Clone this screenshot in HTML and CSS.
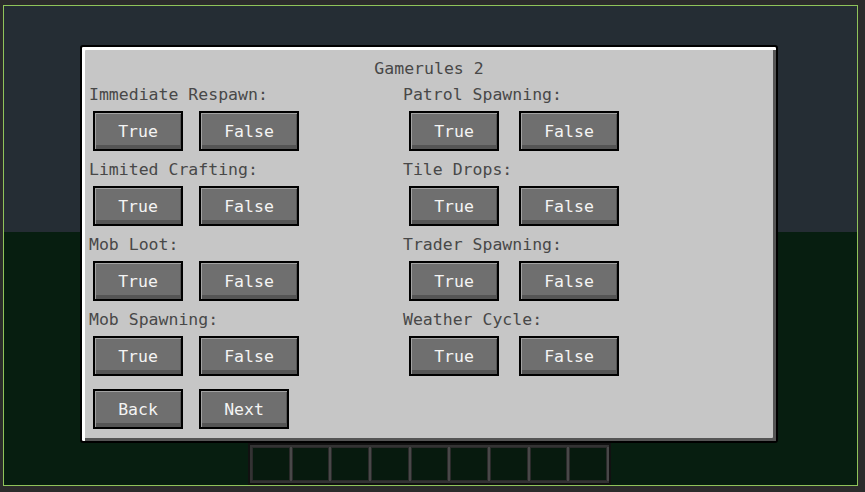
FILE: index.html
```html
<!DOCTYPE html>
<html lang="en">
<head>
    <meta charset="UTF-8">
    <title>Gamerules 2</title>
    <link rel="stylesheet" href="styles.css">
</head>
<body>
<section class="frame">
    <div class="world">
        <div class="panel">
            <h1 class="title">Gamerules 2</h1>
            <div class="rules">
                <div class="column">
                    <div class="rule">
                        <p class="label">Immediate Respawn:</p>
                        <div class="choices">
                            <button class="btn">True</button>
                            <button class="btn wide">False</button>
                        </div>
                    </div>
                    <div class="rule">
                        <p class="label">Limited Crafting:</p>
                        <div class="choices">
                            <button class="btn">True</button>
                            <button class="btn wide">False</button>
                        </div>
                    </div>
                    <div class="rule">
                        <p class="label">Mob Loot:</p>
                        <div class="choices">
                            <button class="btn">True</button>
                            <button class="btn wide">False</button>
                        </div>
                    </div>
                    <div class="rule">
                        <p class="label">Mob Spawning:</p>
                        <div class="choices">
                            <button class="btn">True</button>
                            <button class="btn wide">False</button>
                        </div>
                    </div>
                </div>
                <div class="column right">
                    <div class="rule">
                        <p class="label">Patrol Spawning:</p>
                        <div class="choices">
                            <button class="btn">True</button>
                            <button class="btn wide">False</button>
                        </div>
                    </div>
                    <div class="rule">
                        <p class="label">Tile Drops:</p>
                        <div class="choices">
                            <button class="btn">True</button>
                            <button class="btn wide">False</button>
                        </div>
                    </div>
                    <div class="rule">
                        <p class="label">Trader Spawning:</p>
                        <div class="choices">
                            <button class="btn">True</button>
                            <button class="btn wide">False</button>
                        </div>
                    </div>
                    <div class="rule">
                        <p class="label">Weather Cycle:</p>
                        <div class="choices">
                            <button class="btn">True</button>
                            <button class="btn wide">False</button>
                        </div>
                    </div>
                </div>
            </div>
            <div class="nav">
                <button class="btn">Back</button>
                <button class="btn">Next</button>
            </div>
        </div>
        <div class="hotbar">
            <div class="slot"></div>
            <div class="slot"></div>
            <div class="slot"></div>
            <div class="slot"></div>
            <div class="slot"></div>
            <div class="slot"></div>
            <div class="slot"></div>
            <div class="slot"></div>
            <div class="slot"></div>
        </div>
    </div>
</section>
</body>
</html>
```

FILE: styles.css
```css
* {
    padding: 0;
    margin: 0;
    box-sizing: border-box;
}
body {
    background-color: #2b2b2b;
    font-family: "DejaVu Sans Mono", "Liberation Mono", monospace;
}
.frame {
    width: 865px;
    height: 492px;
    padding: 5px 7px 6px 3px;
}
.world {
    height: 100%;
    border: 1px solid #8fc35a;
    background-image: linear-gradient(#252d34 0, #252d34 226px, #071e10 226px);
    padding-top: 39px;
    display: flex;
    flex-direction: column;
}
.panel {
    width: 698px;
    height: 398px;
    margin-left: 76px;
    background-color: #c6c6c6;
    border: 2px solid #000;
    border-radius: 3px;
    box-shadow: inset 3px 3px 0 #fff, inset -3px -3px 0 #555;
    padding: 12px 4px 0 7px;
}
.title {
    font-size: 16.5px;
    font-weight: normal;
    line-height: 20px;
    color: #484848;
    text-align: center;
    margin-bottom: 6px;
    padding-right: 3px;
}
.rules {
    display: flex;
}
.column {
    width: 314px;
    display: flex;
    flex-direction: column;
    gap: 9px;
}
.label {
    font-size: 16.5px;
    line-height: 20px;
    color: #484848;
    margin-bottom: 6px;
}
.choices {
    display: flex;
    gap: 16px;
    padding-left: 4px;
}
.right .choices {
    gap: 20px;
    padding-left: 6px;
}
.btn {
    width: 90px;
    height: 40px;
    border: 2px solid #000;
    background-color: #6f6f6f;
    box-shadow: inset 1px 1px 0 #a2a2a2, inset -1px -4px 0 #555;
    color: #f4f4f4;
    font-family: "DejaVu Sans Mono", "Liberation Mono", monospace;
    font-size: 16.5px;
    cursor: pointer;
}
.btn.wide {
    width: 100px;
}
.nav {
    display: flex;
    gap: 16px;
    padding-left: 4px;
    margin-top: 13px;
}
.hotbar {
    width: 363px;
    height: 42px;
    margin-left: 244px;
    border: 2px solid #111;
    background-color: #333;
    padding: 3px;
    display: flex;
    gap: 4px;
}
.slot {
    flex: 1;
    background-color: #071a0e;
    box-shadow: 0 0 0 1px #2a2a2a, 2px 0 0 1px #484848;
}
```
